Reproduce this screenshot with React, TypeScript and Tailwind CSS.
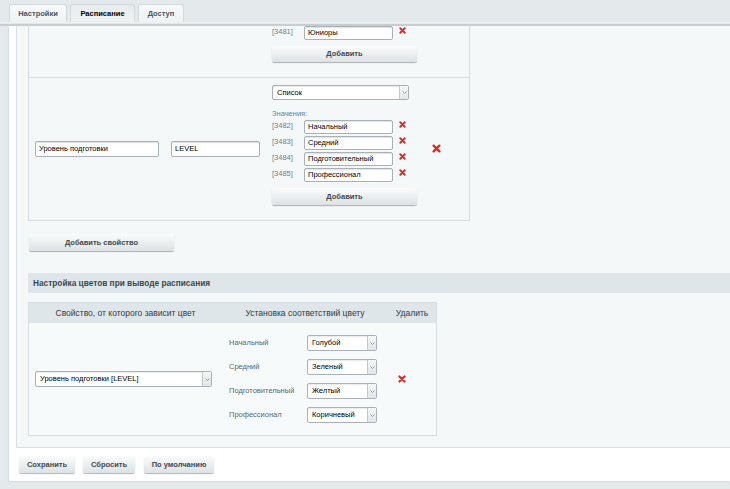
import React from 'react';

const font = { fontFamily: '"Liberation Sans", Arial, sans-serif' };

const Btn: React.FC<{ w: string; label: string; h?: string }> = ({ w, label, h = 'h-[17px]' }) => (
  <div
    className={`${w} ${h} flex items-center justify-center rounded-[2px] bg-gradient-to-b from-[#fbfcfc] to-[#dce2e5] shadow-[0_1px_1px_rgba(0,0,0,0.3)] text-[7.5px] font-bold text-[#3d4a52]`}
  >
    {label}
  </div>
);

const Input: React.FC<{ w: string; value: string; h?: string }> = ({ w, value, h = 'h-[14px]' }) => (
  <div
    className={`${w} ${h} flex items-center rounded-[2px] border border-[#a9b1b6] bg-white pl-[3px] text-[7.5px] text-black shadow-[inset_0_1px_1px_rgba(0,0,0,0.12)]`}
  >
    {value}
  </div>
);

const Select: React.FC<{ w: string; value: string; h?: string }> = ({ w, value, h = 'h-[16px]' }) => (
  <div
    className={`${w} ${h} flex items-stretch rounded-[2px] border border-[#a9b1b6] bg-white text-[7.5px] text-black shadow-[inset_0_1px_1px_rgba(0,0,0,0.08)]`}
  >
    <div className="flex flex-1 items-center pl-[4px]">{value}</div>
    <div className="flex w-[9px] items-center justify-center border-l border-[#c2c9cd] bg-gradient-to-b from-[#f4f6f7] to-[#e3e7e9]">
      <svg width="5" height="3" viewBox="0 0 5 3">
        <path d="M0.5 0.5 L2.5 2.5 L4.5 0.5" fill="none" stroke="#7f8a90" strokeWidth="0.8" />
      </svg>
    </div>
  </div>
);

const Cross: React.FC<{ size?: number }> = ({ size = 7 }) => (
  <svg width={size} height={size} viewBox="0 0 10 10">
    <path d="M1.8 1.8 L8.2 8.2 M8.2 1.8 L1.8 8.2" stroke="#e3281d" strokeWidth="2.6" strokeLinecap="round" />
  </svg>
);

const ValueRow: React.FC<{ id: string; value: string }> = ({ id, value }) => (
  <div className="flex items-center">
    <div className="w-[32px] text-[7.5px] leading-none text-[#6e7f89] -mt-[3px]">[{id}]</div>
    <Input w="w-[89px]" value={value} />
    <div className="ml-[6px] -mt-[5px]">
      <Cross />
    </div>
  </div>
);

const Tab: React.FC<{ label: string; w: string; active?: boolean }> = ({ label, w, active }) => (
  <div
    className={`${w} h-[18px] flex items-center justify-center rounded-t-[3px] border border-b-0 border-[#d2d9dc] text-[7.5px] font-bold ${
      active ? 'bg-gradient-to-b from-[#e6ecee] to-[#eef2f3] text-black' : 'bg-gradient-to-b from-[#f7f9fa] to-[#eef2f3] text-[#4a565d]'
    }`}
  >
    {label}
  </div>
);

const colorRows = [
  ['Начальный', 'Голубой'],
  ['Средний', 'Зеленый'],
  ['Подготовительный', 'Желтый'],
  ['Профессионал', 'Коричневый'],
];

export default function App() {
  return (
    <div className="w-[730px] h-[489px] overflow-hidden bg-[#e4eaec]" style={font}>
      {/* tabs */}
      <div className="flex h-[22px] items-end gap-[3px] pl-[9px]">
        <Tab label="Настройки" w="w-[58px]" />
        <Tab label="Расписание" w="w-[65px]" active />
        <Tab label="Доступ" w="w-[46px]" />
      </div>
      <div className="h-[4px] border-t border-[#f1f4f5] bg-[#e3e9eb] border-b-2 border-b-[#c6ced1]" />

      <div className="ml-[9px] bg-white shadow-[-1px_1px_1px_rgba(0,0,0,0.06)]">
        <div className="ml-[7px] h-[422px] overflow-hidden border-l border-b border-[#d9e0e3] bg-[#f5f8f9] text-[8px] text-[#333]">
          {/* properties box */}
          <div className="ml-[11px] w-[442px] border-x border-b border-[#d6dde0]">
            <div className="flex h-[52px] border-b border-[#d6dde0] pl-[243px]">
              <div className="flex flex-col">
                <ValueRow id="3481" value="Юниоры" />
                <div className="mt-[6px]">
                  <Btn w="w-[145px]" h="h-[16px]" label="Добавить" />
                </div>
              </div>
            </div>
            <div className="flex h-[142px] items-center pl-[6px]">
              <Input w="w-[124px]" h="h-[16px]" value="Уровень подготовки" />
              <div className="ml-[12px]">
                <Input w="w-[89px]" h="h-[16px]" value="LEVEL" />
              </div>
              <div className="ml-[12px] flex flex-col self-start pt-[7px]">
                <Select w="w-[137px]" h="h-[15px]" value="Список" />
                <div className="mt-[9px] h-[11px] text-[7.5px] leading-[10px] text-[#6e7f89]">Значения:</div>
                <div className="flex flex-col gap-[2px]">
                  <ValueRow id="3482" value="Начальный" />
                  <ValueRow id="3483" value="Средний" />
                  <ValueRow id="3484" value="Подготовительный" />
                  <ValueRow id="3485" value="Профессионал" />
                </div>
                <div className="mt-[6px]">
                  <Btn w="w-[145px]" label="Добавить" />
                </div>
              </div>
              <div className="ml-[15px] -mt-[1px]">
                <Cross size={9} />
              </div>
            </div>
          </div>

          <div className="ml-[12px] mt-[13px]">
            <Btn w="w-[145px]" label="Добавить свойство" />
          </div>

          {/* colors section */}
          <div className="ml-[11px] mt-[22px] flex h-[20px] items-center bg-[#dfe6e9] pl-[5px] text-[8.3px] font-bold text-[#3b474e]">
            Настройка цветов при выводе расписания
          </div>

          <div className="ml-[11px] mt-[9px] w-[409px] border border-[#d6dde0]">
            <div className="flex h-[20px] items-center bg-[#dfe6e9] text-[8.5px] text-[#2f3a40]">
              <div className="w-[193px] text-center">Свойство, от которого зависит цвет</div>
              <div className="w-[166px] text-center">Установка соответствий цвету</div>
              <div className="flex-1 text-center">Удалить</div>
            </div>
            <div className="flex h-[112px] items-center bg-[#f7fafa]">
              <div className="w-[192px] pl-[6px]">
                <Select w="w-[177px]" value="Уровень подготовки [LEVEL]" />
              </div>
              <div className="flex w-[166px] flex-col gap-[8px] pl-[8px]">
                {colorRows.map(([label, color]) => (
                  <div key={label} className="flex items-center">
                    <div className="w-[78px] text-[7.5px] text-[#5b666c]">{label}</div>
                    <Select w="w-[70px]" value={color} />
                  </div>
                ))}
              </div>
              <div className="flex-1 pl-[11px]">
                <Cross size={8} />
              </div>
            </div>
          </div>
        </div>

        {/* footer */}
        <div className="flex h-[33px] items-center gap-[8px] pl-[10px]">
          <Btn w="w-[56px]" label="Сохранить" />
          <Btn w="w-[52px]" label="Сбросить" />
          <div className="ml-[1px]">
            <Btn w="w-[70px]" label="По умолчанию" />
          </div>
        </div>
      </div>
    </div>
  );
}
